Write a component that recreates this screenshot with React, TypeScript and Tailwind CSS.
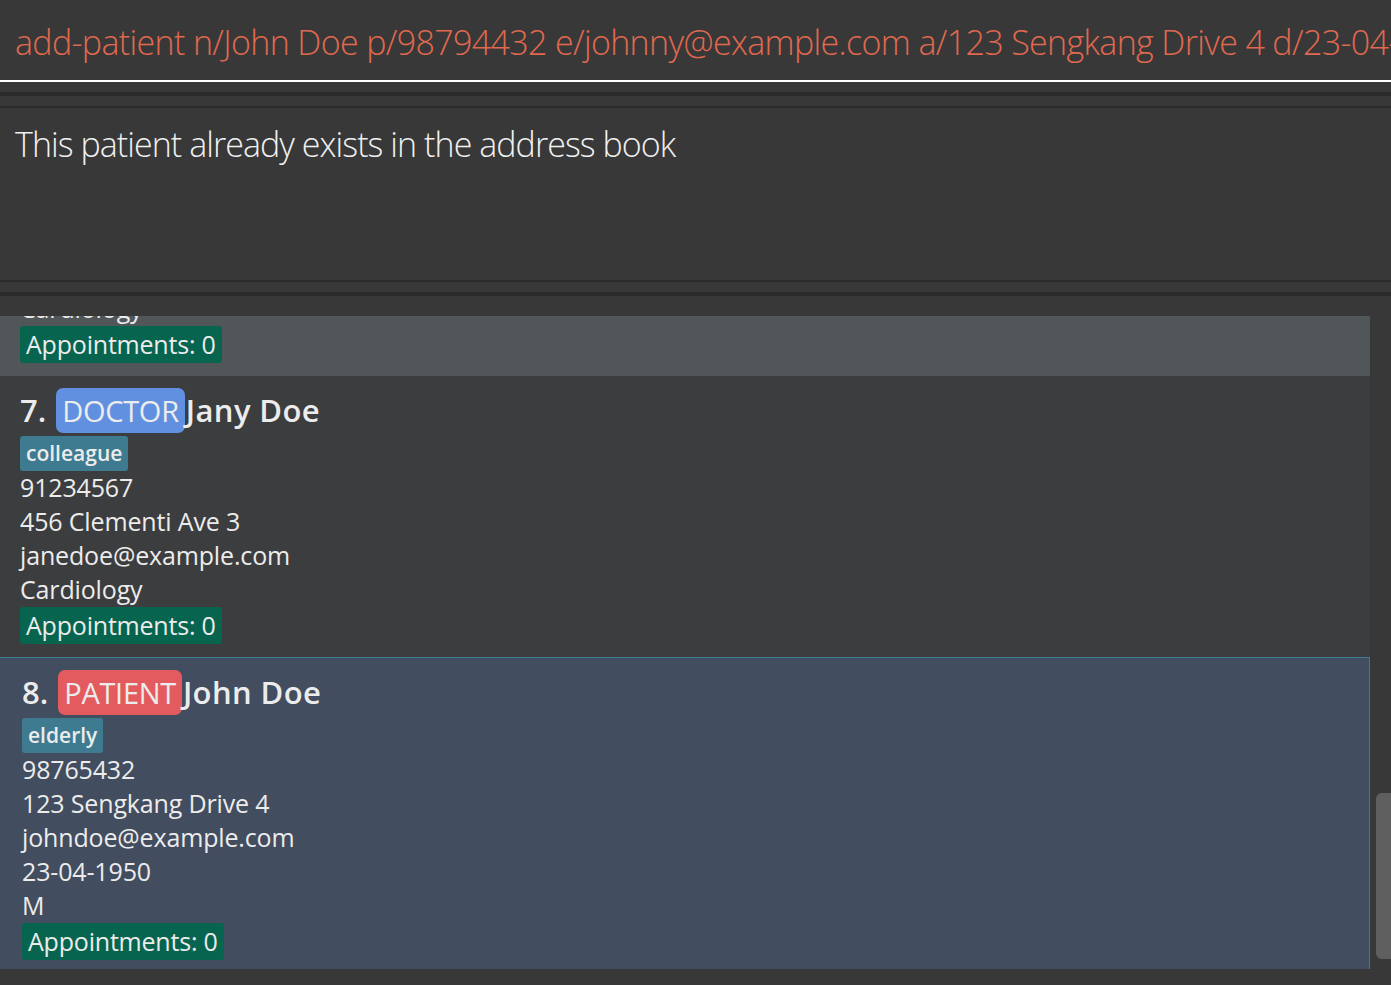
import React from "react";

type Person = {
  idx: number;
  role: "DOCTOR" | "PATIENT";
  name: string;
  tag: string;
  lines: string[];
  appts: number;
};

const people: Person[] = [
  {
    idx: 6,
    role: "DOCTOR",
    name: "Jane Doe",
    tag: "colleague",
    lines: ["91234567", "456 Clementi Ave 3", "janedoe@example.com", "Cardiology"],
    appts: 0,
  },
  {
    idx: 7,
    role: "DOCTOR",
    name: "Jany Doe",
    tag: "colleague",
    lines: ["91234567", "456 Clementi Ave 3", "janedoe@example.com", "Cardiology"],
    appts: 0,
  },
  {
    idx: 8,
    role: "PATIENT",
    name: "John Doe",
    tag: "elderly",
    lines: ["98765432", "123 Sengkang Drive 4", "johndoe@example.com", "23-04-1950", "M"],
    appts: 0,
  },
];

function Cell({ p, variant }: { p: Person; variant: "odd" | "even" | "selected" }) {
  const bg =
    variant === "odd"
      ? "bg-[#515658]"
      : variant === "even"
      ? "bg-[#3c3d3f]"
      : "bg-[#424d5f] border-t border-r border-b border-[#3e7b91] pl-[22px]";
  const pad = variant === "selected" ? "pt-[12px] pb-[10px]" : "pl-[20px] pt-[12px] pb-[13px]";
  return (
    <div className={`${bg} ${pad} flex flex-col items-start text-[#ececec]`}>
      <div className="flex items-center h-[45px] text-[31px] leading-none font-semibold">
        <span className="mr-[10px]">{p.idx}.</span>
        <span
          className={`${
            p.role === "DOCTOR" ? "bg-[#6290e0]" : "bg-[#e45b5f]"
          } px-[6px] h-[45px] flex items-center rounded-[7px] font-normal text-[29px] tracking-[-0.3px]`}
        >
          {p.role}
        </span>
        <span className="ml-[1px] tracking-[0.4px]">{p.name}</span>
      </div>
      <div className="mt-[3px] bg-[#3e7b91] rounded-[3px] px-[6px] h-[35px] flex items-center text-[21px] font-semibold">
        {p.tag}
      </div>
      <div className="flex flex-col mt-[-1px]">
        {p.lines.map((l, i) => (
          <div key={i} className="text-[25px] leading-[34px] h-[34px] tracking-[-0.15px]">
            {l}
          </div>
        ))}
      </div>
      <div className="mt-[1px] bg-[#07654f] rounded-[3px] px-[6px] h-[37px] flex items-center text-[25px] tracking-[-0.2px]">
        Appointments: {p.appts}
      </div>
    </div>
  );
}

export default function App() {
  return (
    <div
      className="w-[1391px] h-[985px] overflow-hidden bg-[#383838] flex flex-col"
      style={{ fontFamily: '"Open Sans", "Noto Sans", sans-serif' }}
    >
      {/* command box */}
      <div className="h-[80px] shrink-0 flex items-center pl-[15px] overflow-hidden whitespace-nowrap">
        <span className="text-[34px] font-light text-[#e0694f] tracking-[-0.65px] mt-[4px]">
          add-patient n/John Doe p/98794432 e/johnny@example.com a/123 Sengkang Drive 4 d/23-04-1950 g/M
        </span>
      </div>
      <div className="h-[2px] shrink-0 bg-white" />
      <div className="h-[10px] shrink-0" />
      <div className="h-[4px] shrink-0 bg-[#2b2b2b]" />
      <div className="h-[10px] shrink-0" />
      <div className="h-[2px] shrink-0 bg-[#2b2b2b]" />
      {/* result display */}
      <div className="h-[172px] shrink-0 pl-[15px] pt-[18px]">
        <div className="text-[34px] font-light text-[#f0f0f0] tracking-[-0.95px] leading-[36px]">
          This patient already exists in the address book
        </div>
      </div>
      <div className="h-[2px] shrink-0 bg-[#2b2b2b]" />
      <div className="h-[10px] shrink-0" />
      <div className="h-[4px] shrink-0 bg-[#2b2b2b]" />
      <div className="h-[20px] shrink-0" />
      {/* list */}
      <div className="flex h-[653px] shrink-0">
        <div className="w-[1370px] overflow-hidden">
          <div className="mt-[-221px]">
            <Cell p={people[0]} variant="odd" />
            <Cell p={people[1]} variant="even" />
            <Cell p={people[2]} variant="selected" />
          </div>
        </div>
        <div className="flex-1 relative">
          <div className="absolute left-[6px] right-0 top-[477px] h-[166px] bg-[#5f5f5f] rounded-l-[6px]" />
        </div>
      </div>
    </div>
  );
}
